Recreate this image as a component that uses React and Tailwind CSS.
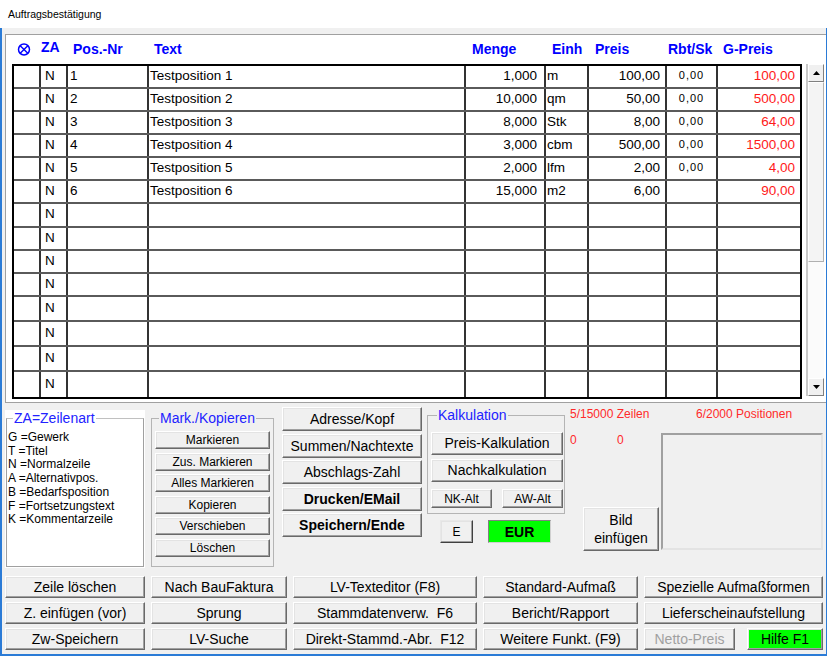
import React from 'react';
import { twMerge } from 'tailwind-merge';

const positions = [
    { pos: '1', text: 'Testposition 1', menge: '1,000', einh: 'm', preis: '100,00', rbt: '0,00', g: '100,00' },
    { pos: '2', text: 'Testposition 2', menge: '10,000', einh: 'qm', preis: '50,00', rbt: '0,00', g: '500,00' },
    { pos: '3', text: 'Testposition 3', menge: '8,000', einh: 'Stk', preis: '8,00', rbt: '0,00', g: '64,00' },
    { pos: '4', text: 'Testposition 4', menge: '3,000', einh: 'cbm', preis: '500,00', rbt: '0,00', g: '1500,00' },
    { pos: '5', text: 'Testposition 5', menge: '2,000', einh: 'lfm', preis: '2,00', rbt: '0,00', g: '4,00' },
    { pos: '6', text: 'Testposition 6', menge: '15,000', einh: 'm2', preis: '6,00', rbt: '', g: '90,00' },
];

// 14 rows in the grid, the rest are empty "N" rows
const rows = [...positions, ...Array.from({ length: 8 }, () => ({ pos: '', text: '', menge: '', einh: '', preis: '', rbt: '', g: '' }))];

const rowHeights = ['h-[23px]', 'h-[23px]', 'h-[23px]', 'h-[23px]', 'h-[23px]', 'h-[23px]', 'h-[24px]', 'h-[23px]', 'h-[23px]', 'h-[23px]', 'h-[25px]', 'h-[25px]', 'h-[25px]', 'h-[25px]'];

const lineCell = 'border-r-2 border-[#333333]';

const zeilenarten = ['G =Gewerk', 'T =Titel', 'N =Normalzeile', 'A =Alternativpos.', 'B =Bedarfsposition', 'F =Fortsetzungstext', 'K =Kommentarzeile'];

const markButtons = ['Markieren', 'Zus. Markieren', 'Alles Markieren', 'Kopieren', 'Verschieben', 'Löschen'];

function Btn({ className = '', children }) {
    return (
        <button
            type="button"
            className={twMerge(
                'flex items-center justify-center shrink-0 bg-[#f0f0f0] border border-t-white border-l-white border-r-[#696969] border-b-[#696969] shadow-[inset_-1px_-1px_0_#a0a0a0,inset_1px_1px_0_#e3e3e3] text-black leading-none',
                className
            )}
        >
            {children}
        </button>
    );
}

function Arrow({ up }) {
    return (
        <svg width="7" height="4" viewBox="0 0 7 4">
            {up ? <polygon points="0,4 7,4 3.5,0" fill="#000" /> : <polygon points="0,0 7,0 3.5,4" fill="#000" />}
        </svg>
    );
}

export default function App() {
    return (
        <div className="w-[827px] h-[656px] flex flex-col bg-white font-['Liberation_Sans',Arial,sans-serif] text-black overflow-hidden">

            {/* Title bar */}
            <div className="h-[28px] shrink-0 pl-[8px] pt-[7px] text-[10.5px] leading-[14px]">
                Auftragsbestätigung
            </div>

            {/* Window body */}
            <div className="flex-1 flex flex-col bg-[#f0f0f0] border-l-2 border-r border-b-2 border-[#2b7bd6] pt-[6px] pl-[3px]">

                {/* Positions frame */}
                <div className="h-[369px] shrink-0 bg-white border border-[#a0a0a0] border-r-0">

                    {/* Column header */}
                    <div className="flex h-[29px] pl-[6px] text-[14px] font-bold leading-[16px] text-[#0000ff]">
                        <div className="w-[29px] shrink-0 pl-[5px] pt-[8px]">
                            <svg width="14" height="13" viewBox="0 0 14 13">
                                <circle cx="7" cy="6.5" r="5.5" fill="none" stroke="#0000ff" strokeWidth="1.5" />
                                <line x1="3.2" y1="2.7" x2="10.8" y2="10.3" stroke="#0000ff" strokeWidth="1.4" />
                                <line x1="10.8" y1="2.7" x2="3.2" y2="10.3" stroke="#0000ff" strokeWidth="1.4" />
                            </svg>
                        </div>
                        <div className="w-[27px] shrink-0 pt-[4px]">ZA</div>
                        <div className="w-[81px] shrink-0 pl-[5px] pt-[6px]">Pos.-Nr</div>
                        <div className="w-[317px] shrink-0 pl-[5px] pt-[6px]">Text</div>
                        <div className="w-[80px] shrink-0 pl-[6px] pt-[6px]">Menge</div>
                        <div className="w-[43px] shrink-0 pl-[6px] pt-[6px]">Einh</div>
                        <div className="w-[78px] shrink-0 pl-[6px] pt-[6px]">Preis</div>
                        <div className="w-[51px] shrink-0 pl-[1px] pt-[6px]">Rbt/Sk</div>
                        <div className="w-[82px] shrink-0 pl-[5px] pt-[6px]">G-Preis</div>
                    </div>

                    <div className="flex items-start pl-[6px]">
                        {/* Grid */}
                        <div className="w-[790px] h-[335px] shrink-0 border-2 border-black text-[13.5px] leading-[16px]">
                            {rows.map((row, i) => (
                                <div key={i} className={`flex ${rowHeights[i]} ${i < rows.length - 1 ? 'border-b-2 border-[#5a5a5a]' : ''}`}>
                                    <div className={`w-[27px] shrink-0 h-full ${lineCell}`} />
                                    <div className={`w-[27px] shrink-0 h-full flex items-center pl-[4px] pb-[2px] ${lineCell}`}>N</div>
                                    <div className={`w-[81px] shrink-0 h-full flex items-center pl-[2px] pb-[2px] ${lineCell}`}>{row.pos}</div>
                                    <div className={`w-[317px] shrink-0 h-full flex items-center pl-[1px] pb-[2px] ${lineCell}`}>{row.text}</div>
                                    <div className={`w-[80px] shrink-0 h-full flex items-center justify-end pr-[7px] pb-[2px] ${lineCell}`}>{row.menge}</div>
                                    <div className={`w-[43px] shrink-0 h-full flex items-center pl-[1px] pb-[2px] ${lineCell}`}>{row.einh}</div>
                                    <div className={`w-[78px] shrink-0 h-full flex items-center justify-end pr-[5px] pb-[2px] ${lineCell}`}>{row.preis}</div>
                                    <div className={`w-[51px] shrink-0 h-full flex justify-center pt-[3px] text-[11px] tracking-[1px] leading-[12px] ${lineCell}`}>{row.rbt}</div>
                                    <div className="w-[82px] shrink-0 h-full flex items-center justify-end pr-[5px] pb-[2px] text-[#ff1a1a]">{row.g}</div>
                                </div>
                            ))}
                        </div>

                        {/* Scrollbar */}
                        <div className="ml-[4px] w-[18px] h-[332px] shrink-0 flex flex-col bg-[#fbfbfb] border-l-2 border-[#c8c8c8]">
                            <div className="h-[18px] shrink-0 flex items-center justify-center bg-[#f0f0f0] border border-t-white border-l-white border-r-[#808080] border-b-[#808080]">
                                <Arrow up />
                            </div>
                            <div className="h-[180px] shrink-0 bg-[#f4f4f4] border border-t-white border-l-white border-r-[#b0b0b0] border-b-[#b0b0b0]" />
                            <div className="flex-1" />
                            <div className="h-[18px] shrink-0 flex items-center justify-center bg-[#f0f0f0] border border-t-white border-l-white border-r-[#808080] border-b-[#808080]">
                                <Arrow />
                            </div>
                        </div>
                    </div>
                </div>

                {/* Lower panel */}
                <div className="h-[173px] shrink-0 flex items-start">

                    {/* ZA legend */}
                    <div className="mt-[7px] w-[140px] h-[158px] shrink-0 bg-white px-[1px]">
                        <fieldset className="h-[157px] border border-[#a0a0a0] border-t-[#c0c0c0]">
                            <legend className="ml-[6px] px-[1px] text-[14px] leading-[16px] text-[#2222ff]">ZA=Zeilenart</legend>
                            <div className="pt-[5px] pl-[1px] text-[12px] leading-[13.7px]">
                                {zeilenarten.map((z) => (
                                    <div key={z}>{z}</div>
                                ))}
                            </div>
                        </fieldset>
                    </div>

                    {/* Mark./Kopieren */}
                    <fieldset className="ml-[6px] mt-[7px] w-[122px] h-[157px] shrink-0 border border-[#b4b4b4] px-[3px]">
                        <legend className="ml-[4px] px-[1px] text-[14px] leading-[16px] text-[#2222ff]">Mark./Kopieren</legend>
                        <div className="pt-[5px] flex flex-col gap-[3.5px]">
                            {markButtons.map((b) => (
                                <Btn key={b} className="h-[18px] w-[115px] text-[12px]">{b}</Btn>
                            ))}
                        </div>
                    </fieldset>

                    {/* Main actions */}
                    <div className="ml-[8px] mt-[4px] w-[140px] shrink-0 flex flex-col gap-[2.5px] text-[14px]">
                        <Btn className="h-[24px] w-[140px]">Adresse/Kopf</Btn>
                        <Btn className="h-[24px] w-[140px]">Summen/Nachtexte</Btn>
                        <Btn className="h-[24px] w-[140px]">Abschlags-Zahl</Btn>
                        <Btn className="h-[24px] w-[140px] font-bold">Drucken/EMail</Btn>
                        <Btn className="h-[24px] w-[140px] font-bold">Speichern/Ende</Btn>
                    </div>

                    {/* Kalkulation */}
                    <div className="ml-[5px] mt-[4px] w-[138px] shrink-0 flex flex-col">
                        <fieldset className="border border-[#b4b4b4] pl-[3px] pr-[1px] pb-[5px]">
                            <legend className="ml-[6px] px-[1px] text-[14px] leading-[16px] text-[#2222ff]">Kalkulation</legend>
                            <div className="pt-[9px] flex flex-col">
                                <Btn className="h-[23px] w-[132px] text-[14px]">Preis-Kalkulation</Btn>
                                <Btn className="mt-[4px] h-[23px] w-[132px] text-[14px]">Nachkalkulation</Btn>
                                <div className="mt-[7px] flex gap-[10px]">
                                    <Btn className="h-[19px] w-[61px] text-[12px]">NK-Alt</Btn>
                                    <Btn className="h-[19px] w-[61px] text-[12px]">AW-Alt</Btn>
                                </div>
                            </div>
                        </fieldset>
                        <div className="mt-[6px] flex items-center pl-[13px] gap-[15px]">
                            <Btn className="h-[23px] w-[33px] text-[12px] border-t-[#e8e8e8] border-l-[#e8e8e8] border-r-[#404040] border-b-[#404040]">E</Btn>
                            <div className="h-[23px] w-[63px] flex items-center justify-center bg-[#00ff00] border border-t-[#808080] border-l-[#808080] border-r-[#d0d0d0] border-b-[#d0d0d0] text-[14px] font-bold leading-none">
                                EUR
                            </div>
                        </div>
                    </div>

                    {/* Counters and picture */}
                    <div className="ml-[5px] flex text-[12px] leading-[14px] text-[#ff2a2a]">
                        <div className="w-[91px] shrink-0 flex flex-col">
                            <div className="mt-[4px] whitespace-nowrap">5/15000 Zeilen</div>
                            <div className="mt-[12px] flex">
                                <span className="w-[47px]">0</span>
                                <span>0</span>
                            </div>
                            <Btn className="ml-[13px] mt-[60px] h-[44px] w-[76px] flex-col text-[14px] leading-[18px]">
                                <span>Bild</span>
                                <span>einfügen</span>
                            </Btn>
                        </div>
                        <div className="w-[162px] shrink-0 flex flex-col">
                            <div className="mt-[4px] pl-[35px] whitespace-nowrap">6/2000 Positionen</div>
                            <div className="mt-[12px] h-[117px] w-[162px] bg-[#f0f0f0] border-2 border-t-[#a0a0a0] border-l-[#a0a0a0] border-r-[#e3e3e3] border-b-[#e3e3e3]" />
                        </div>
                    </div>
                </div>

                {/* Function buttons */}
                <div className="flex flex-col gap-[4px] text-[14px]">
                    <div className="flex gap-[6px]">
                        <Btn className="h-[22px] w-[140px]">Zeile löschen</Btn>
                        <Btn className="h-[22px] w-[136px]">Nach BauFaktura</Btn>
                        <Btn className="h-[22px] w-[184px]">LV-Texteditor (F8)</Btn>
                        <Btn className="h-[22px] w-[155px]">Standard-Aufmaß</Btn>
                        <Btn className="h-[22px] w-[179px]">Spezielle Aufmaßformen</Btn>
                    </div>
                    <div className="flex gap-[6px]">
                        <Btn className="h-[22px] w-[140px]">Z. einfügen (vor)</Btn>
                        <Btn className="h-[22px] w-[136px]">Sprung</Btn>
                        <Btn className="h-[22px] w-[184px] whitespace-pre">Stammdatenverw.  F6</Btn>
                        <Btn className="h-[22px] w-[155px]">Bericht/Rapport</Btn>
                        <Btn className="h-[22px] w-[179px]">Lieferscheinaufstellung</Btn>
                    </div>
                    <div className="flex gap-[6px]">
                        <Btn className="h-[22px] w-[140px]">Zw-Speichern</Btn>
                        <Btn className="h-[22px] w-[136px]">LV-Suche</Btn>
                        <Btn className="h-[22px] w-[184px] whitespace-pre">Direkt-Stammd.-Abr.  F12</Btn>
                        <Btn className="h-[22px] w-[155px]">Weitere Funkt. (F9)</Btn>
                        <div className="flex gap-[12px]">
                            <Btn className="h-[22px] w-[91px] text-[#a0a0a0]">Netto-Preis</Btn>
                            <Btn className="h-[22px] w-[76px] bg-[#00ff00]">Hilfe F1</Btn>
                        </div>
                    </div>
                </div>
            </div>
        </div>
    );
}
